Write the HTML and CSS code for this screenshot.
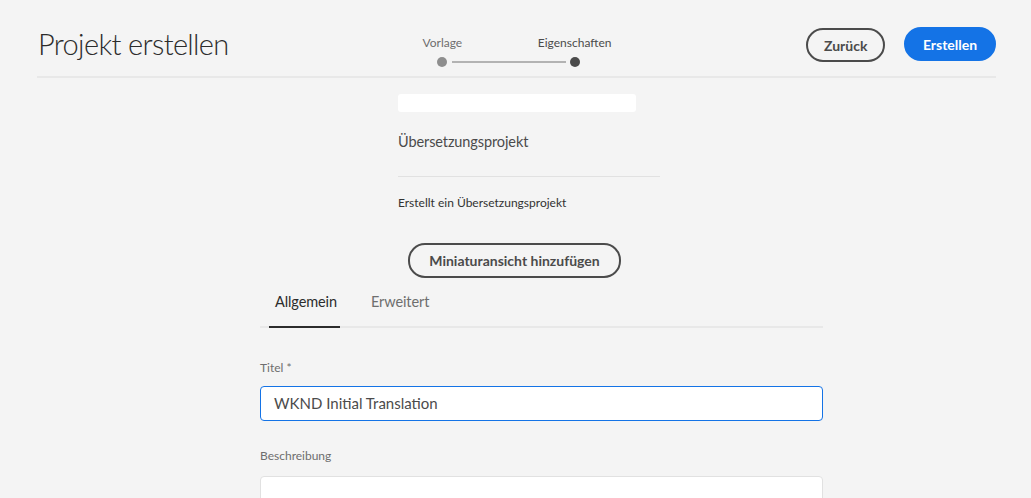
FILE: index.html
```html
<!DOCTYPE html>
<html lang="de">
<head>
<meta charset="utf-8">
<title>Projekt erstellen</title>
<link rel="stylesheet" href="styles.css">
</head>
<body>
<header class="header">
  <h1 class="title">Projekt erstellen</h1>
  <div class="stepper">
    <div class="step step-done">
      <span class="step-label">Vorlage</span>
      <span class="step-dot"></span>
    </div>
    <div class="step step-current">
      <span class="step-label">Eigenschaften</span>
      <span class="step-dot"></span>
    </div>
    <span class="step-line"></span>
  </div>
  <div class="actions">
    <button class="btn btn-secondary">Zurück</button>
    <button class="btn btn-primary">Erstellen</button>
  </div>
</header>
<main class="main">
  <section class="template">
    <div class="template-thumb"></div>
    <div class="template-name">Übersetzungsprojekt</div>
    <div class="template-rule"></div>
    <div class="template-desc">Erstellt ein Übersetzungsprojekt</div>
  </section>
  <div class="thumb-action">
    <button class="btn btn-secondary btn-thumb">Miniaturansicht hinzufügen</button>
  </div>
  <section class="form">
    <nav class="tabs">
      <span class="tab tab-active">Allgemein</span>
      <span class="tab">Erweitert</span>
    </nav>
    <label class="field-label">Titel *</label>
    <div class="input input-focus">WKND Initial Translation</div>
    <label class="field-label field-label-2">Beschreibung</label>
    <div class="input textarea"></div>
  </section>
</main>
</body>
</html>
```
FILE: styles.css
```css
* { box-sizing: border-box; }
html, body { margin: 0; padding: 0; }
body {
  background: #f4f4f4;
  font-family: "Lato", "Open Sans", sans-serif;
  color: #4b4b4b;
  width: 1031px;
  height: 498px;
  overflow: hidden;
}
.header {
  display: flex;
  align-items: flex-start;
  margin: 0 35px 0 37px;
  height: 78px;
  border-bottom: 2px solid #e8e8e8;
}
.title {
  flex: 1;
  margin: 26px 0 0 1px;
  font-size: 29px;
  font-weight: 300;
  color: #2c2c2c;
  line-height: 36px;
  letter-spacing: -0.65px;
}
.stepper {
  position: relative;
  display: flex;
  justify-content: space-between;
  width: 189px;
  margin-top: 35px;
}
.step {
  display: flex;
  flex-direction: column;
  align-items: center;
}
.step-label {
  font-size: 12px;
  line-height: 16px;
  color: #4b4b4b;
}
.step-done .step-label { color: #6e6e6e; }
.step-dot {
  width: 10px;
  height: 10px;
  border-radius: 50%;
  margin-top: 6px;
  background: #8e8e8e;
}
.step-current .step-dot { background: #4b4b4b; }
.step-line {
  position: absolute;
  left: 29px;
  top: 26px;
  width: 114px;
  height: 2px;
  background: #b3b3b3;
}
.actions {
  flex: 1;
  display: flex;
  justify-content: flex-end;
  gap: 19px;
  margin-top: 27px;
}
.btn {
  font-family: inherit;
  font-size: 14px;
  font-weight: 700;
  height: 34px;
  border-radius: 17px;
  padding: 0 16px;
  cursor: pointer;
}
.btn-secondary {
  background: transparent;
  border: 2px solid #4b4b4b;
  color: #4b4b4b;
  height: 34px;
  margin-top: 1px;
  width: 79px;
}
.btn-primary {
  background: #1473e6;
  border: 2px solid #1473e6;
  color: #fff;
  width: 92px;
}
.main {
  position: relative;
}
.template {
  margin-left: 398px;
  width: 262px;
  padding-top: 16px;
}
.template-thumb {
  width: 238px;
  height: 18px;
  background: #fff;
  border-radius: 3px;
}
.template-name {
  margin-top: 18px;
  font-size: 14.5px;
  line-height: 24px;
  color: #4b4b4b;
  letter-spacing: -0.1px;
}
.template-rule {
  margin-top: 22px;
  height: 1px;
  background: #e1e1e1;
}
.template-desc {
  margin-top: 17px;
  font-size: 12px;
  line-height: 18px;
  color: #323232;
}
.thumb-action {
  display: flex;
  justify-content: center;
  margin-top: 31px;
}
.btn-thumb {
  width: 213px;
  height: 35px;
  margin: 0 0 0 -2px;
  padding: 0;
}
.form {
  margin-left: 260px;
  width: 563px;
}
.tabs {
  display: flex;
  height: 50px;
  border-bottom: 2px solid #e8e8e8;
  padding-left: 9px;
}
.tab {
  position: relative;
  font-size: 14.5px;
  line-height: 48px;
  color: #6e6e6e;
  padding: 0 3px 0 6px;
  margin-right: 25px;
  letter-spacing: -0.1px;
}
.tab-active {
  color: #2c2c2c;
}
.tab-active::after {
  content: "";
  position: absolute;
  left: 0;
  right: 0;
  bottom: -2px;
  height: 2px;
  background: #2c2c2c;
}
.field-label {
  display: block;
  font-size: 12px;
  line-height: 18px;
  color: #6e6e6e;
  margin-top: 31px;
}
.field-label-2 { margin-top: 26px; }
.input {
  margin-top: 9px;
  height: 35px;
  background: #fff;
  border: 1px solid #e1e1e1;
  border-radius: 4px;
  padding: 0 13px;
  font-size: 15px;
  line-height: 33px;
  color: #4b4b4b;
}
.input-focus { border-color: #1473e6; }
.textarea { height: 60px; margin-top: 11px; }
```
